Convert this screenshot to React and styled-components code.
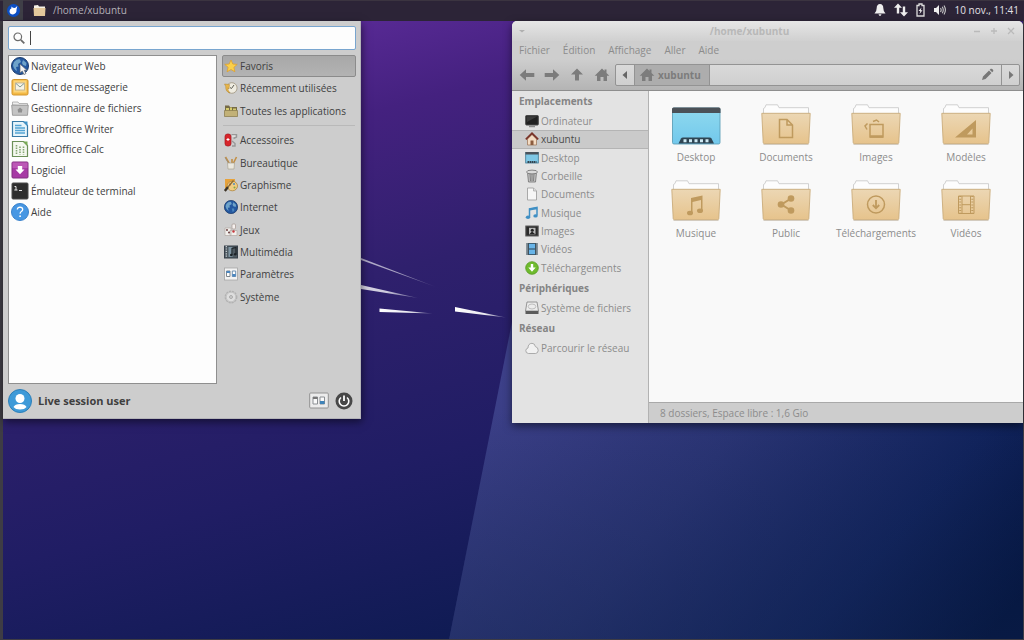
import React, { useState } from "react";
import styled, { createGlobalStyle, css } from "styled-components";

const GlobalStyle = createGlobalStyle`
  * {
    box-sizing: border-box;
  }
  body {
    margin: 0;
    background: #16194f;
    font-family: "Open Sans", "Noto Sans", sans-serif;
    font-size: 10px;
    line-height: 16px;
    color: #3f3f3f;
  }
  button, input {
    font: inherit;
    color: inherit;
    margin: 0;
    padding: 0;
    border: 0;
    background: none;
    white-space: nowrap;
  }
  svg {
    display: block;
    flex: none;
  }
`;

/* ---------- icons ---------- */

const Globe = ({ size, cursor }) => (
  <svg width={size} height={size} viewBox="0 0 18 18">
    <circle cx="9" cy="9" r="8.5" fill="#2458a0" stroke="#1c3c6c" />
    <path d="M3 5Q6 1.5 9 2.5L10 5 7 7 7.500 9.500 5 10 6 14Q2.500 12 2 8ZM12 3L15.500 6 15 9 12 8 11 6Z" fill="#6fa3c9" />
    <path d="M10 11L13 11 13 14 11 15.500Z" fill="#4b87bd" />
    {cursor && <path d="M9 7V16L11.300 14 13 17.500 15 16.500 13.300 13.300H16Z" fill="#f4f4f4" stroke="#57606c" strokeWidth=".7" />}
  </svg>
);

const APP_ICONS = {
  web: <Globe size={18} cursor />,
  mail: (
    <svg width="18" height="18" viewBox="0 0 18 18">
      <rect x="1" y="1.500" width="16" height="15.500" rx="1.500" fill="#f3b944" stroke="#d2952c" />
      <rect x="2.500" y="2.500" width="13" height="12" fill="#fbd57d" />
      <rect x="4.500" y="5" width="9" height="7" fill="#f7f3e6" stroke="#b4ac97" strokeWidth=".8" />
      <path d="M5 5.500L9 9 13 5.500" fill="none" stroke="#7f9a94" />
    </svg>
  ),
  files: (
    <svg width="18" height="18" viewBox="0 0 18 18">
      <path d="M1.500 6V3H7L8 4.500H16.500V7Z" fill="#ededed" stroke="#a5a5a5" strokeWidth=".8" />
      <path d="M.7 6.200H17.300L16.500 16.300H1.500Z" fill="#c4c4c4" stroke="#8f8f8f" strokeWidth=".8" />
      <path d="M9 8.500L12 11.200H11V13.500H7V11.200H6Z" fill="#8f8f8f" />
    </svg>
  ),
  writer: (
    <svg width="18" height="18" viewBox="0 0 18 18">
      <path d="M1.500 1.500H12.500L16.500 5.500V16.500H1.500Z" fill="#e6f4fb" stroke="#387aa6" strokeWidth="1.200" />
      <path d="M12 1.500L16.500 6V1.500Z" fill="#3f93c9" />
      <path d="M4 5.500H10.500M4 8H14M4 10.500H14M4 13H14" stroke="#54a4d4" strokeWidth="1.300" />
    </svg>
  ),
  calc: (
    <svg width="18" height="18" viewBox="0 0 18 18">
      <path d="M1.500 1.500H12.500L16.500 5.500V16.500H1.500Z" fill="#f4f8ef" stroke="#6c9058" strokeWidth="1.200" />
      <path d="M12 1.500L16.500 6V1.500Z" fill="#79ab55" />
      <path d="M5.500 5V14.500M9 6.500V14.500M12.500 6.500V14.500" stroke="#85a573" strokeWidth="1.600" strokeDasharray="1.500 1" />
    </svg>
  ),
  software: (
    <svg width="18" height="18" viewBox="0 0 18 18">
      <rect x="1" y="1" width="16" height="16" rx="1" fill="#a73aa5" stroke="#823081" />
      <path d="M1.500 1.500H16.500V7H1.500Z" fill="#c465bd" opacity=".7" />
      <path d="M6.800 5H11.200V8.500H13.500L9 13.300 4.500 8.500H6.800Z" fill="#fff" />
    </svg>
  ),
  terminal: (
    <svg width="18" height="18" viewBox="0 0 18 18">
      <rect x="1" y="1" width="16" height="16" rx="1" fill="#2e2e2e" stroke="#4b4b4b" />
      <path d="M3.500 4.500H5V8M3.300 8H6.500M8 8.500H11" fill="none" stroke="#e8e8e8" />
    </svg>
  ),
  help: (
    <svg width="18" height="18" viewBox="0 0 18 18">
      <circle cx="9" cy="9" r="8.500" fill="#4797e3" stroke="#3a82cc" />
      <path d="M6.300 6.500Q6.500 4.200 9 4.200 11.700 4.300 11.700 6.500 11.700 7.700 10.300 8.500 9.100 9.200 9.100 10.700" fill="none" stroke="#fff" strokeWidth="1.300" />
      <circle cx="9.100" cy="13.200" r=".9" fill="#fff" />
    </svg>
  ),
};

const CATEGORY_ICONS = {
  star: (
    <svg width="14" height="14" viewBox="0 0 14 14">
      <path d="M7 1L8.800 5 13.200 5.400 9.900 8.300 10.900 12.800 7 10.500 3.100 12.800 4.100 8.300 .8 5.400 5.200 5Z" fill="#fbd04a" stroke="#dfa12c" strokeWidth=".8" />
    </svg>
  ),
  recent: (
    <svg width="14" height="14" viewBox="0 0 14 14">
      <circle cx="7.800" cy="7" r="5.300" fill="#efece1" stroke="#aaa18e" />
      <path d="M10 4L7.500 7.500 6 6.500" fill="none" stroke="#5b5b52" />
      <path d="M.5 3L5.500 3.500 5 8 3.800 6.800Q3.500 9.500 6 12 1.500 11 1.700 5.300Z" fill="#e8b64b" stroke="#b1822c" strokeWidth=".5" />
    </svg>
  ),
  all: (
    <svg width="14" height="14" viewBox="0 0 14 14">
      <path d="M1 1.500H5L6 3H13V8H1Z" fill="#766b46" />
      <path d="M2 4H5V7H2ZM6 3.500H8V7H6ZM9 4.500H12V7H9Z" fill="#d5cb6c" />
      <path d="M.5 6.500H13.500V12.500H.5Z" fill="#c2b177" stroke="#8d7f52" strokeWidth=".8" />
    </svg>
  ),
  accessories: (
    <svg width="14" height="14" viewBox="0 0 14 14">
      <rect x="1" y="1" width="6" height="12" rx="2.500" fill="#d7252b" stroke="#a4161c" strokeWidth=".7" />
      <path d="M4 5V8M2.500 6.500H5.500" stroke="#fff" />
      <path d="M7.500 1.800H12.500V4L9.500 5.500M8 8L11 10.500V13H8" fill="none" stroke="#989898" strokeWidth="1.400" />
      <path d="M8 3H11.500" stroke="#f0f0f0" />
    </svg>
  ),
  office: (
    <svg width="14" height="14" viewBox="0 0 14 14">
      <path d="M1.500 1L5.500 8M8 3V8M12.500 1L9 8" stroke="#c28f45" strokeWidth="1.600" />
      <path d="M1 1.500L5 8" stroke="#8d8d8d" strokeWidth=".7" />
      <path d="M3.500 7H10.500L10 13H4Z" fill="#ebe8df" stroke="#aaa594" strokeWidth=".7" />
    </svg>
  ),
  graphics: (
    <svg width="14" height="14" viewBox="0 0 14 14">
      <rect x="1" y="1" width="10" height="9" fill="#e7a23a" />
      <ellipse cx="8.300" cy="8" rx="5.200" ry="4.800" fill="#f0cd83" stroke="#a97c30" strokeWidth=".7" />
      <circle cx="6" cy="6.500" r="1" fill="#c9442f" />
      <circle cx="10" cy="6" r="1" fill="#518bc0" />
      <circle cx="10.500" cy="9.500" r="1" fill="#86a846" />
      <path d="M.8 13L4 9" fill="none" stroke="#3c3326" strokeWidth="2.400" />
      <path d="M4 9L9.500 2.500" fill="none" stroke="#8a6a35" strokeWidth="1.200" />
    </svg>
  ),
  internet: <Globe size={14} />,
  games: (
    <svg width="14" height="14" viewBox="0 0 14 14">
      <path d="M1 5H7V12.500H1ZM6 7.500H13V12.500H6Z" fill="#f2f0ed" stroke="#b3a9a4" strokeWidth=".7" />
      <rect x="8" y="1" width="3.500" height="5" rx="1" fill="#f5f0ee" stroke="#a3958f" strokeWidth=".7" />
      <circle cx="3" cy="7" r=".9" fill="#5e3031" />
      <circle cx="5" cy="9.500" r=".9" fill="#5e3031" />
      <circle cx="9.500" cy="8.500" r="1.200" fill="#c5353b" />
    </svg>
  ),
  media: (
    <svg width="14" height="14" viewBox="0 0 14 14">
      <rect x=".5" y="1" width="13" height="12" fill="#4f5a62" stroke="#37404a" />
      <path d="M2.300 1V13" stroke="#cfd6da" strokeWidth="1.200" strokeDasharray="1.200 1.200" />
      <rect x="4.500" y="2" width="4" height="10" fill="#7f95a3" />
      <path d="M8 10V3.500L12 2.500V9" fill="none" stroke="#1d2328" strokeWidth="1.200" />
      <circle cx="7.300" cy="10" r="1.300" fill="#1d2328" />
      <circle cx="11.200" cy="9.300" r="1.300" fill="#1d2328" />
    </svg>
  ),
  settings: (
    <svg width="14" height="14" viewBox="0 0 14 14">
      <rect x=".5" y="1" width="13" height="12" fill="#f3f3f3" stroke="#a5a5a5" strokeWidth=".8" />
      <path d="M2.500 4H6V9.500H2.500Z" fill="#fff" stroke="#7d858c" />
      <path d="M8.300 4H11.700V9.500H8.300Z" fill="#fff" stroke="#6d8fb0" />
      <path d="M2.500 4H6V6H2.500ZM8.300 7H11.700V9.500H8.300Z" fill="#4c87c0" />
    </svg>
  ),
  system: (
    <svg width="14" height="14" viewBox="0 0 14 14">
      <circle cx="7" cy="7" r="5.700" fill="none" stroke="#b2b2b2" strokeWidth="1.400" strokeDasharray="2.200 .8" />
      <circle cx="7" cy="7" r="4.800" fill="#dedede" stroke="#bababa" strokeWidth=".7" />
      <circle cx="7" cy="7" r="1.500" fill="#cfcfcf" stroke="#a0a0a0" strokeWidth=".8" />
    </svg>
  ),
};

const PLACE_ICONS = {
  computer: (
    <svg width="14" height="14" viewBox="0 0 14 14">
      <rect x=".7" y="1.500" width="12.600" height="9.500" rx=".8" fill="#222" stroke="#4a4a4a" />
      <path d="M1.500 2.300H12.500L2 8Z" fill="#3c3c3c" />
      <path d="M4 12.500H10" stroke="#8e8e8e" strokeWidth="1.400" />
    </svg>
  ),
  home: (
    <svg width="14" height="14" viewBox="0 0 14 14">
      <path d="M2.500 7L7 2.500 11.500 7V13H2.500Z" fill="#f4dcc3" stroke="#9f7b60" strokeWidth=".8" />
      <path d="M.8 7.300L7 1.300 13.200 7.300" fill="none" stroke="#7a3328" strokeWidth="1.700" />
      <path d="M5.500 13V8.500H8.500V13Z" fill="#8b5b3e" />
    </svg>
  ),
  desktop: (
    <svg width="14" height="14" viewBox="0 0 14 14">
      <rect x=".7" y="1.500" width="12.600" height="10.500" fill="#7fc8e6" stroke="#3f7792" strokeWidth=".8" />
      <path d="M.5 1H13.500V3.500H.5Z" fill="#4a525a" />
      <path d="M2.500 11H11.500" stroke="#33424e" strokeWidth="1.800" strokeDasharray="1.500 .5" />
    </svg>
  ),
  trash: (
    <svg width="14" height="14" viewBox="0 0 14 14">
      <path d="M2.500 3.500H11.500L10.500 13H3.500Z" fill="#c2c2c2" stroke="#6f6f6f" strokeWidth=".8" />
      <path d="M5 5L5.500 12M7 5V12M9 5L8.500 12" stroke="#7f7f7f" />
      <ellipse cx="7" cy="3" rx="5.500" ry="1.900" fill="#dadada" stroke="#6f6f6f" strokeWidth=".8" />
    </svg>
  ),
  document: (
    <svg width="14" height="14" viewBox="0 0 14 14">
      <path d="M2.500 1H8.500L11.500 4V13H2.500Z" fill="#f6f6f6" stroke="#a2a2a2" strokeWidth=".9" />
      <path d="M8.500 1V4H11.500" fill="#ddd" stroke="#a2a2a2" strokeWidth=".7" />
    </svg>
  ),
  music: (
    <svg width="14" height="14" viewBox="0 0 14 14">
      <path d="M4.500 11V2.800L12 1.500V9.500" fill="none" stroke="#3f8fc4" strokeWidth="1.500" />
      <path d="M4.500 3.600L12 2.300" stroke="#3f8fc4" strokeWidth="2" />
      <ellipse cx="3" cy="11.300" rx="2.200" ry="1.700" fill="#3f8fc4" />
      <ellipse cx="10.500" cy="9.900" rx="2.200" ry="1.700" fill="#3f8fc4" />
    </svg>
  ),
  image: (
    <svg width="14" height="14" viewBox="0 0 14 14">
      <rect x=".8" y="2" width="12.400" height="10" fill="#2b2b2b" stroke="#5e5e5e" />
      <rect x="4" y="3.800" width="6.500" height="6.500" fill="#b9b9b9" />
      <circle cx="7.300" cy="6.300" r="1.500" fill="#222" />
      <path d="M4.500 10L7 7.500 10 10Z" fill="#222" />
    </svg>
  ),
  video: (
    <svg width="14" height="14" viewBox="0 0 14 14">
      <rect x="1.500" y="1" width="11" height="12" fill="#2f4350" />
      <path d="M4 1.800H10V6.500H4ZM4 7.500H10V12.300H4Z" fill="#68b4e8" />
      <path d="M2.700 1.500V13M11.300 1.500V13" stroke="#dce3e8" strokeDasharray="1 1" />
    </svg>
  ),
  download: (
    <svg width="14" height="14" viewBox="0 0 14 14">
      <circle cx="7" cy="7" r="6.300" fill="#6fbb2e" stroke="#579a22" strokeWidth=".8" />
      <path d="M5.800 3H8.200V6.500H10.700L7 10.800 3.300 6.500H5.800Z" fill="#fff" />
    </svg>
  ),
  drive: (
    <svg width="14" height="14" viewBox="0 0 14 14">
      <path d="M2 1H12L13.500 10H.5Z" fill="#ececec" stroke="#808080" strokeWidth=".8" />
      <path d="M.5 10H13.500V13H.5Z" fill="#5b5b5b" />
      <ellipse cx="7" cy="5.500" rx="3.800" ry="2.500" fill="none" stroke="#bdbdbd" />
    </svg>
  ),
  cloud: (
    <svg width="14" height="14" viewBox="0 0 14 14">
      <path d="M3.500 12.500Q.7 12.300 .8 9.500 1 7.500 3 7 3 2.500 7 2.300 10 2.500 10.300 5.500 13.300 6.300 13.200 9.500 13 12.300 10.500 12.500Z" fill="#f1f1f1" stroke="#9b9b9b" strokeWidth=".8" />
    </svg>
  ),
};

const EMBLEMS = {
  document: <path d="M18.500 15.500H26L31.500 21V33.500H18.500ZM26 15.500V21H31.500" fill="none" stroke="#bf9a5e" strokeWidth="1.500" />,
  image: (
    <g fill="none" stroke="#bf9a5e" strokeWidth="1.500">
      <path d="M19 20.500H32V33H19Z" />
      <path d="M19 32.500H32" strokeWidth="2.500" />
      <path d="M22 17.500L25.500 16 28 18M16.500 19.500L14 22 16 25.500" />
    </g>
  ),
  template: <path d="M14 33.500L35 16V33.500ZM26 30.500H31.500V24.500Z" fill="#bf9a5e" fillRule="evenodd" />,
  music: (
    <g fill="#bf9a5e">
      <path d="M20 18L31.500 15.500V31H30V20L21.500 22V33.500H20Z" />
      <ellipse cx="19" cy="33" rx="3" ry="2.300" />
      <ellipse cx="29" cy="30.800" rx="3" ry="2.300" />
    </g>
  ),
  share: (
    <g fill="#bf9a5e">
      <path d="M30 18.500L20.500 24.500 30 30.500" fill="none" stroke="#bf9a5e" strokeWidth="2" />
      <circle cx="30" cy="18.500" r="3.300" />
      <circle cx="20" cy="24.500" r="3.300" />
      <circle cx="30" cy="30.500" r="3.300" />
    </g>
  ),
  download: (
    <g fill="none" stroke="#bf9a5e" strokeWidth="1.500">
      <circle cx="25" cy="24.500" r="8.500" />
      <path d="M25 20V28M21.800 25L25 28.300 28.200 25" strokeWidth="1.800" />
    </g>
  ),
  video: (
    <g fill="none" stroke="#bf9a5e">
      <path d="M17.500 16H33V33.500H17.500ZM21 16V33.500M29.500 16V33.500M21 24.700H29.500" />
      <path d="M19.200 16V33.500M31.300 16V33.500" strokeWidth="2" strokeDasharray="1 1.800" />
    </g>
  ),
};

const FolderIcon = ({ emblem }) => (
  <svg width="50" height="42" viewBox="0 0 50 42">
    <defs>
      <linearGradient id="folderFront" x1="0" y1="0" x2="0" y2="1">
        <stop offset="0" stopColor="#ecd7b4" />
        <stop offset="1" stopColor="#e6c38c" />
      </linearGradient>
    </defs>
    <path d="M2.500 10V4.500L4 3.500 5 .8H16.500L18 3.700H47.500V10Z" fill="#fdfdfd" stroke="#c5c5c5" strokeWidth=".8" />
    <path d="M.8 9.300H49.200L47.800 38.500Q47.700 39.700 46.500 39.700H3.500Q2.300 39.700 2.200 38.500Z" fill="url(#folderFront)" stroke="#c9ab7a" strokeWidth=".9" />
    <path d="M2.500 40.500H47.500" stroke="#d3cbbf" />
    {EMBLEMS[emblem]}
  </svg>
);

const DesktopIcon = () => (
  <svg width="50" height="42" viewBox="0 0 50 42">
    <defs>
      <linearGradient id="desktopScreen" x1="0" y1="0" x2="0" y2="1">
        <stop offset="0" stopColor="#8fd9ee" />
        <stop offset="1" stopColor="#72c8ec" />
      </linearGradient>
    </defs>
    <rect x="1.500" y="4" width="47.500" height="36" rx="1.500" fill="url(#desktopScreen)" stroke="#5e9fb8" strokeWidth=".9" />
    <path d="M1 9V5Q1 3.500 2.500 3.500H48Q49.500 3.500 49.500 5V9Z" fill="#4b5157" />
    <path d="M7.500 39.500L10 34.500Q10.500 33.500 12 33.500H38.500Q40 33.500 40.500 34.500L43 39.500Z" fill="#2f4553" />
    <path d="M12.500 36.700H39" stroke="#cfeaf4" strokeWidth="3" strokeDasharray="3 2.500" />
  </svg>
);

const HomeGlyph = () => (
  <svg width="16" height="16" viewBox="0 0 16 16" fill="#7c7c7c">
    <path d="M8 1.500L10.500 4V2.500H12.500V6L15.300 8.800H13V14H9.500V10H6.500V14H3V8.800H.7Z" />
  </svg>
);

const NavArrow = ({ turn }) => (
  <svg width="16" height="16" viewBox="0 0 16 16" fill="#7c7c7c">
    <path transform={`rotate(${turn} 8 8)`} d={turn === 90 ? "M1.500 8L7.500 2V6H13.500V10H7.500V14Z" : "M.7 8L7 2.300V6H15.300V10H7V13.700Z"} />
  </svg>
);

const Wallpaper = () => (
  <Backdrop viewBox="3 21 1020 618" preserveAspectRatio="none" aria-hidden="true">
    <defs>
      <linearGradient id="night" gradientUnits="userSpaceOnUse" x1="330" y1="0" x2="500" y2="640">
        <stop offset="0" stopColor="#5d2c9a" />
        <stop offset=".18" stopColor="#44217f" />
        <stop offset=".42" stopColor="#2f206d" />
        <stop offset=".7" stopColor="#201d64" />
        <stop offset="1" stopColor="#0e1b52" />
      </linearGradient>
      <linearGradient id="beam" gradientUnits="userSpaceOnUse" x1="540" y1="330" x2="950" y2="680">
        <stop offset="0" stopColor="#3d4089" />
        <stop offset=".4" stopColor="#2a3474" />
        <stop offset=".75" stopColor="#11235c" />
        <stop offset="1" stopColor="#01123c" />
      </linearGradient>
      <linearGradient id="beamFade" x1="0" y1="0" x2="0" y2="1">
        <stop offset=".6" stopColor="#132650" stopOpacity="0" />
        <stop offset="1" stopColor="#132650" stopOpacity=".4" />
      </linearGradient>
      <linearGradient id="streak">
        <stop offset="0" stopColor="#fff" />
        <stop offset=".6" stopColor="#fff" stopOpacity=".9" />
        <stop offset="1" stopColor="#fff" stopOpacity=".2" />
      </linearGradient>
    </defs>
    <rect width="1024" height="640" fill="url(#night)" />
    <path d="M449 640L512 322 560 90 1024 60V640Z" fill="url(#beam)" />
    <path d="M449 640L512 322 560 90 1024 60V640Z" fill="url(#beamFade)" />
    <g fill="url(#streak)">
      <path d="M340 250L361 258 436 287 361 260Z" opacity=".65" />
      <path d="M340 282L361 285 418 298 361 289Z" opacity=".85" />
      <path d="M379.500 308.500L433 313.500 379.500 312Z" />
      <path d="M455 307L506 317.500 455 311.500Z" />
    </g>
  </Backdrop>
);

/* ---------- data ---------- */

const apps = [
  ["web", "Navigateur Web"],
  ["mail", "Client de messagerie"],
  ["files", "Gestionnaire de fichiers"],
  ["writer", "LibreOffice Writer"],
  ["calc", "LibreOffice Calc"],
  ["software", "Logiciel"],
  ["terminal", "Émulateur de terminal"],
  ["help", "Aide"],
];

const filters = [
  ["star", "Favoris"],
  ["recent", "Récemment utilisées"],
  ["all", "Toutes les applications"],
];

const categories = [
  ["accessories", "Accessoires"],
  ["office", "Bureautique"],
  ["graphics", "Graphisme"],
  ["internet", "Internet"],
  ["games", "Jeux"],
  ["media", "Multimédia"],
  ["settings", "Paramètres"],
  ["system", "Système"],
];

const places = [
  {
    title: "Emplacements",
    height: 165,
    items: [
      ["computer", "Ordinateur"],
      ["home", "xubuntu"],
      ["desktop", "Desktop"],
      ["trash", "Corbeille"],
      ["document", "Documents"],
      ["music", "Musique"],
      ["image", "Images"],
      ["video", "Vidéos"],
      ["download", "Téléchargements"],
    ],
  },
  { title: "Périphériques", height: 18, items: [["drive", "Système de fichiers"]] },
  { title: "Réseau", height: 18, items: [["cloud", "Parcourir le réseau"]] },
];

const folders = [
  ["desktop", "Desktop"],
  ["document", "Documents"],
  ["image", "Images"],
  ["template", "Modèles"],
  ["music", "Musique"],
  ["share", "Public"],
  ["download", "Téléchargements"],
  ["video", "Vidéos"],
];

/* ---------- page ---------- */

export default function App() {
  const [query, setQuery] = useState("");
  const [category, setCategory] = useState("Favoris");
  const [place, setPlace] = useState("xubuntu");

  const renderCategory = ([icon, name]) => (
    <CategoryButton key={name} $active={name === category} onClick={() => setCategory(name)}>
      {CATEGORY_ICONS[icon]}
      {name}
    </CategoryButton>
  );

  return (
    <Screen>
      <GlobalStyle />
      <Panel>
        <MenuButton aria-label="Menu">
          <svg width="15" height="15" viewBox="0 0 15 15">
            <circle cx="7.500" cy="7.500" r="6.500" fill="#0b4fc4" />
            <path d="M3.500 8.500Q3.500 6 5.500 5.300L5.300 3.500 7 4.800 9 5 11.300 3 10.500 6.500Q11 10.500 7 11.500 3.800 11.300 3.500 8.500Z" fill="#fff" />
          </svg>
        </MenuButton>
        <Task>
          <svg width="13" height="13" viewBox="0 0 13 13">
            <path d="M1 4V1.500L5 1 6 2.500H12V5Z" fill="#f6f1e7" />
            <path d="M.5 4H12.500L12 12H1Z" fill="#e3c89c" />
          </svg>
          /home/xubuntu
        </Task>
        <Tray>
          <svg width="12" height="14" viewBox="0 0 12 14" fill="#eee">
            <path d="M6 1Q9.300 1.300 9.300 5 9.300 8.500 11.500 10.500H.5Q2.700 8.500 2.700 5 2.700 1.300 6 1ZM4.500 11.300H7.500Q7 13 6 13 5 13 4.500 11.300Z" />
          </svg>
          <svg width="14" height="14" viewBox="0 0 14 14" fill="#eee">
            <path d="M4 .5L8 4.800H5.200V10.500H2.800V4.800H0ZM10 13.500L6 9.200H8.800V3.500H11.200V9.200H14Z" />
          </svg>
          <svg width="9" height="14" viewBox="0 0 9 14">
            <path d="M1 2.500H3V1H6V2.500H8V13H1Z" fill="none" stroke="#ddd" strokeWidth="1.300" />
            <path d="M5.500 4.500L2.500 8H4.300L3.500 11 6.500 7.300H4.800Z" fill="#eee" />
          </svg>
          <svg width="14" height="14" viewBox="0 0 14 14">
            <path d="M1 5H3L6 2V12L3 9H1Z" fill="#eee" />
            <path d="M7.500 5Q8.800 7 7.500 9M9.300 3.800Q11.200 7 9.300 10.200M11 2.500Q13.800 7 11 11.500" fill="none" stroke="#c9c9c9" strokeWidth="1.100" />
          </svg>
          <time>10 nov., 11:41</time>
        </Tray>
      </Panel>

      <Workspace>
        <Wallpaper />

        <WhiskerMenu>
          <SearchBox>
            <svg width="12" height="12" viewBox="0 0 12 12" fill="none" stroke="#6b6b6b">
              <circle cx="4.800" cy="4.800" r="3.800" strokeWidth="1.200" />
              <path d="M7.800 7.800L11.300 11.300" strokeWidth="1.800" />
            </svg>
            <Caret />
            <SearchInput aria-label="Rechercher" value={query} onChange={(e) => setQuery(e.target.value)} />
          </SearchBox>
          <MenuColumns>
            <AppList>
              <AppRows>
                {apps.map(([icon, name]) => (
                  <AppButton key={name}>
                    {APP_ICONS[icon]}
                    {name}
                  </AppButton>
                ))}
              </AppRows>
            </AppList>
            <Categories>
              <CategoryGroup $height={67}>{filters.map(renderCategory)}</CategoryGroup>
              <Separator />
              <CategoryGroup $height={179}>{categories.map(renderCategory)}</CategoryGroup>
            </Categories>
          </MenuColumns>
          <MenuFooter>
            <svg width="24" height="24" viewBox="0 0 24 24">
              <circle cx="12" cy="12" r="11.500" fill="#3e9ad8" stroke="#2d7fb8" />
              <circle cx="12" cy="9.500" r="4.500" fill="#fff" />
              <path d="M5.500 18Q7 15 12 15 17 15 18.500 18 16.500 20.500 12 20.500 7.500 20.500 5.500 18Z" fill="#fff" />
            </svg>
            <UserName>Live session user</UserName>
            <IconButton aria-label="Paramètres">
              <svg width="20" height="18" viewBox="0 0 20 18">
                <rect x=".7" y="1" width="18.600" height="15" rx="1" fill="#ececec" stroke="#929292" />
                <path d="M4 5H8.500V12H4ZM11 5H15.500V12H11Z" fill="#fafafa" stroke="#8b8f93" />
                <path d="M4 5H8.500V7H4Z" fill="#777" />
                <path d="M11 9H15.500V12H11Z" fill="#3f83b8" />
              </svg>
            </IconButton>
            <IconButton aria-label="Déconnexion">
              <svg width="18" height="18" viewBox="0 0 18 18">
                <circle cx="9" cy="9" r="8.500" fill="#484848" />
                <path d="M6 5.500A4.800 4.800 0 1 0 12 5.500" fill="none" stroke="#fff" strokeWidth="1.600" />
                <path d="M9 3.500V9" stroke="#fff" strokeWidth="1.800" />
              </svg>
            </IconButton>
          </MenuFooter>
        </WhiskerMenu>

        <FileWindow>
          <TitleBar>
            <TitleButton aria-label="Menu de la fenêtre">
              <svg width="8" height="8" viewBox="0 0 8 8"><path d="M1 3H7L4 5.500Z" fill="#b0b0b0" /></svg>
            </TitleButton>
            <WindowTitle>/home/xubuntu</WindowTitle>
            <TitleButton aria-label="Réduire">
              <svg width="8" height="8" viewBox="0 0 8 8"><path d="M1 4.500H7" stroke="#bababa" strokeWidth="1.300" /></svg>
            </TitleButton>
            <TitleButton aria-label="Agrandir">
              <svg width="8" height="8" viewBox="0 0 8 8"><path d="M1 4H7M4 1V7" stroke="#bababa" strokeWidth="1.300" /></svg>
            </TitleButton>
            <TitleButton aria-label="Fermer">
              <svg width="8" height="8" viewBox="0 0 8 8"><path d="M1 1L7 7M7 1L1 7" stroke="#bababa" strokeWidth="1.300" /></svg>
            </TitleButton>
          </TitleBar>
          <MenuBar>
            {["Fichier", "Édition", "Affichage", "Aller", "Aide"].map((name) => (
              <button key={name}>{name}</button>
            ))}
          </MenuBar>
          <ToolBar>
            <NavButtons>
              <IconButton aria-label="Précédent"><NavArrow turn={0} /></IconButton>
              <IconButton aria-label="Suivant"><NavArrow turn={180} /></IconButton>
              <IconButton aria-label="Dossier parent"><NavArrow turn={90} /></IconButton>
              <IconButton aria-label="Dossier personnel"><HomeGlyph /></IconButton>
            </NavButtons>
            <PathBar>
              <PathArrow aria-label="Défiler à gauche">
                <svg width="8" height="10" viewBox="0 0 8 10"><path d="M6 1V9L1.500 5Z" fill="#666" /></svg>
              </PathArrow>
              <PathCurrent>
                <HomeGlyph />
                xubuntu
              </PathCurrent>
              <PathEdit aria-label="Modifier le chemin">
                <svg width="13" height="13" viewBox="0 0 13 13" fill="#777">
                  <path d="M1 12L2 8.500 8 2.500 10.500 5 4.500 11ZM8.700 1.800L9.800 .8Q10.500 .4 11.200 1L12 1.800Q12.600 2.500 12.200 3.200L11.200 4.300Z" />
                </svg>
              </PathEdit>
              <PathArrow $last aria-label="Défiler à droite">
                <svg width="8" height="10" viewBox="0 0 8 10"><path d="M2 1V9L6.500 5Z" fill="#777" /></svg>
              </PathArrow>
            </PathBar>
          </ToolBar>
          <WindowBody>
            <SideBar>
              {places.map(({ title, height, items }) => (
                <PlaceSection key={title}>
                  <PlaceTitle>{title}</PlaceTitle>
                  <PlaceList $height={height}>
                    {items.map(([icon, name]) => (
                      <PlaceButton key={name} $active={name === place} onClick={() => setPlace(name)}>
                        {PLACE_ICONS[icon]}
                        {name}
                      </PlaceButton>
                    ))}
                  </PlaceList>
                </PlaceSection>
              ))}
            </SideBar>
            <MainPane>
              <FolderGrid>
                {folders.map(([emblem, name]) => (
                  <FolderButton key={name}>
                    {emblem === "desktop" ? <DesktopIcon /> : <FolderIcon emblem={emblem} />}
                    {name}
                  </FolderButton>
                ))}
              </FolderGrid>
              <StatusBar>8 dossiers, Espace libre : 1,6 Gio</StatusBar>
            </MainPane>
          </WindowBody>
        </FileWindow>
      </Workspace>
    </Screen>
  );
}

/* ---------- styles ---------- */

const Screen = styled.div`
  display: flex;
  flex-direction: column;
  min-height: 100vh;
`;

const Panel = styled.header`
  display: flex;
  align-items: center;
  height: 21px;
  padding: 0 5px 1px 0;
  background: #2c2437;
  box-shadow: inset 0 1px #3b3440;
  color: #b3b0b7;
`;

const MenuButton = styled.button`
  display: grid;
  place-items: center;
  align-self: stretch;
  width: 20px;
  margin-left: 3px;
  background: #3f3f47;
`;

const Task = styled.button`
  display: flex;
  align-items: center;
  gap: 7px;
  margin-left: 10px;
`;

const Tray = styled.div`
  display: flex;
  align-items: center;
  gap: 8px;
  margin-left: auto;
  color: #e4e2e6;
`;

const Workspace = styled.main`
  position: relative;
  flex: 1;
  border: solid #3e3c44;
  border-width: 0 1px 1px 3px;
`;

const Backdrop = styled.svg`
  position: absolute;
  inset: 0;
  width: 100%;
  height: 100%;
`;

const WhiskerMenu = styled.section`
  position: absolute;
  top: 0;
  left: 0;
  display: flex;
  flex-direction: column;
  gap: 5px;
  width: 358px;
  padding: 5px 4px 5px 5px;
  background: #cdcdcd;
  border-right: 1px solid #b4b4b8;
  border-bottom: 1px solid #b4b4b8;
  box-shadow: 1px 3px 8px rgba(0, 0, 0, 0.5);
`;

const SearchBox = styled.label`
  display: flex;
  align-items: center;
  height: 24px;
  padding: 0 4px;
  background: #fdfdfd;
  border: 1px solid #78a5cf;
  border-radius: 2px;
`;

const Caret = styled.span`
  width: 1px;
  height: 14px;
  margin-left: 5px;
  background: #444;
`;

const SearchInput = styled.input`
  flex: 1;
  min-width: 0;
  caret-color: transparent;
  outline: none;
`;

const MenuColumns = styled.div`
  display: flex;
  gap: 5px;
`;

const AppList = styled.div`
  flex: 1;
  min-height: 329px;
  background: #fdfdfd;
  border: 1px solid #8f8f8f;
`;

const AppRows = styled.div`
  display: grid;
  grid-auto-rows: 1fr;
  min-height: 166px;
`;

const AppButton = styled.button`
  display: flex;
  align-items: center;
  gap: 2px;
  padding-left: 2px;
`;

const Categories = styled.nav`
  width: 134px;
`;

const CategoryGroup = styled.div`
  display: grid;
  grid-auto-rows: 1fr;
  min-height: ${({ $height }) => $height}px;
`;

const CategoryButton = styled.button`
  display: flex;
  align-items: center;
  gap: 2px;
  padding-left: 1px;
  border: 1px solid transparent;
  border-radius: 2px;
  ${({ $active }) => $active && css`
    background: linear-gradient(#a8a8a8, #b3b3b3);
    border-color: #8b8b8b;
  `}
`;

const Separator = styled.hr`
  height: 1px;
  margin: 3px 1px;
  border: 0;
  background: #b9b9b9;
`;

const MenuFooter = styled.footer`
  display: flex;
  align-items: center;
  gap: 6px;
  height: 24px;
  padding-right: 3px;
`;

const UserName = styled.strong`
  flex: 1;
  font-size: 11px;
`;

const IconButton = styled.button`
  display: grid;
  place-items: center;
`;

const FileWindow = styled.section`
  position: absolute;
  top: 0;
  left: calc(50% - 1px);
  right: 0;
  display: flex;
  flex-direction: column;
  background: #cecece;
  border-radius: 5px 5px 0 0;
  box-shadow: 0 3px 8px rgba(0, 0, 0, 0.5);
  color: #8c8c8c;
  overflow: hidden;
`;

const TitleBar = styled.div`
  display: flex;
  align-items: center;
  gap: 9px;
  height: 20px;
  padding: 0 8px 0 6px;
  background: linear-gradient(#e6e6e6, #d0d0d0);
`;

const TitleButton = styled.button`
  display: grid;
  place-items: center;
`;

const WindowTitle = styled.h1`
  flex: 1;
  margin: 0;
  font-size: 10px;
  text-align: center;
  color: #b8b8b8;
`;

const MenuBar = styled.div`
  display: flex;
  align-items: center;
  gap: 13px;
  height: 18px;
  padding-left: 7px;
`;

const ToolBar = styled.div`
  display: flex;
  align-items: center;
  gap: 5px;
  height: 32px;
  padding: 0 3px 0 7px;
  background: linear-gradient(#cecece, #b4b4b4);
  border-bottom: 1px solid #8e8e8e;
`;

const NavButtons = styled.div`
  display: flex;
  gap: 9px;
`;

const PathBar = styled.div`
  display: flex;
  flex: 1;
  height: 22px;
  background: linear-gradient(#d9d9d9, #cfcfcf);
  border: 1px solid #939393;
  border-radius: 2px;
`;

const PathArrow = styled.button`
  display: grid;
  place-items: center;
  width: 18px;
  ${({ $last }) => $last && css`
    border-left: 1px solid #939393;
  `}
`;

const PathCurrent = styled.button`
  display: flex;
  align-items: center;
  gap: 3px;
  padding: 0 8px 0 4px;
  background: #adadad;
  border: solid #939393;
  border-width: 0 1px;
  color: #7c7c7c;
  font-weight: 700;
`;

const PathEdit = styled.button`
  display: grid;
  place-items: center;
  width: 28px;
  margin-left: auto;
`;

const WindowBody = styled.div`
  display: flex;
  min-height: 332px;
`;

const SideBar = styled.nav`
  width: 137px;
  background: #e3e3e3;
  border-right: 1px solid #b2b2b2;
`;

const PlaceSection = styled.section`
  margin-bottom: 1px;
`;

const PlaceTitle = styled.h2`
  margin: 0;
  padding-left: 7px;
  font-size: 10px;
  line-height: 21px;
  color: #858585;
`;

const PlaceList = styled.div`
  display: grid;
  grid-auto-rows: 1fr;
  min-height: ${({ $height }) => $height}px;
`;

const PlaceButton = styled.button`
  display: flex;
  align-items: center;
  gap: 2px;
  padding-left: 13px;
  ${({ $active }) => $active && css`
    background: #cacaca;
    box-shadow: inset 0 1px #b4b4b4, inset 0 -1px #b4b4b4;
    color: #4c4c4c;
  `}
`;

const MainPane = styled.div`
  display: flex;
  flex-direction: column;
  flex: 1;
  background: #f9f9f9;
`;

const FolderGrid = styled.div`
  display: grid;
  grid-template-columns: repeat(auto-fill, 90px);
  flex: 1;
  align-content: start;
  padding: 13px 2px 0;
`;

const FolderButton = styled.button`
  display: flex;
  flex-direction: column;
  align-items: center;
  gap: 3px;
  height: 76px;
`;

const StatusBar = styled.footer`
  height: 21px;
  padding: 0 11px;
  line-height: 20px;
  background: #cdcdcd;
  border-top: 1px solid #a9a9a9;
`;
